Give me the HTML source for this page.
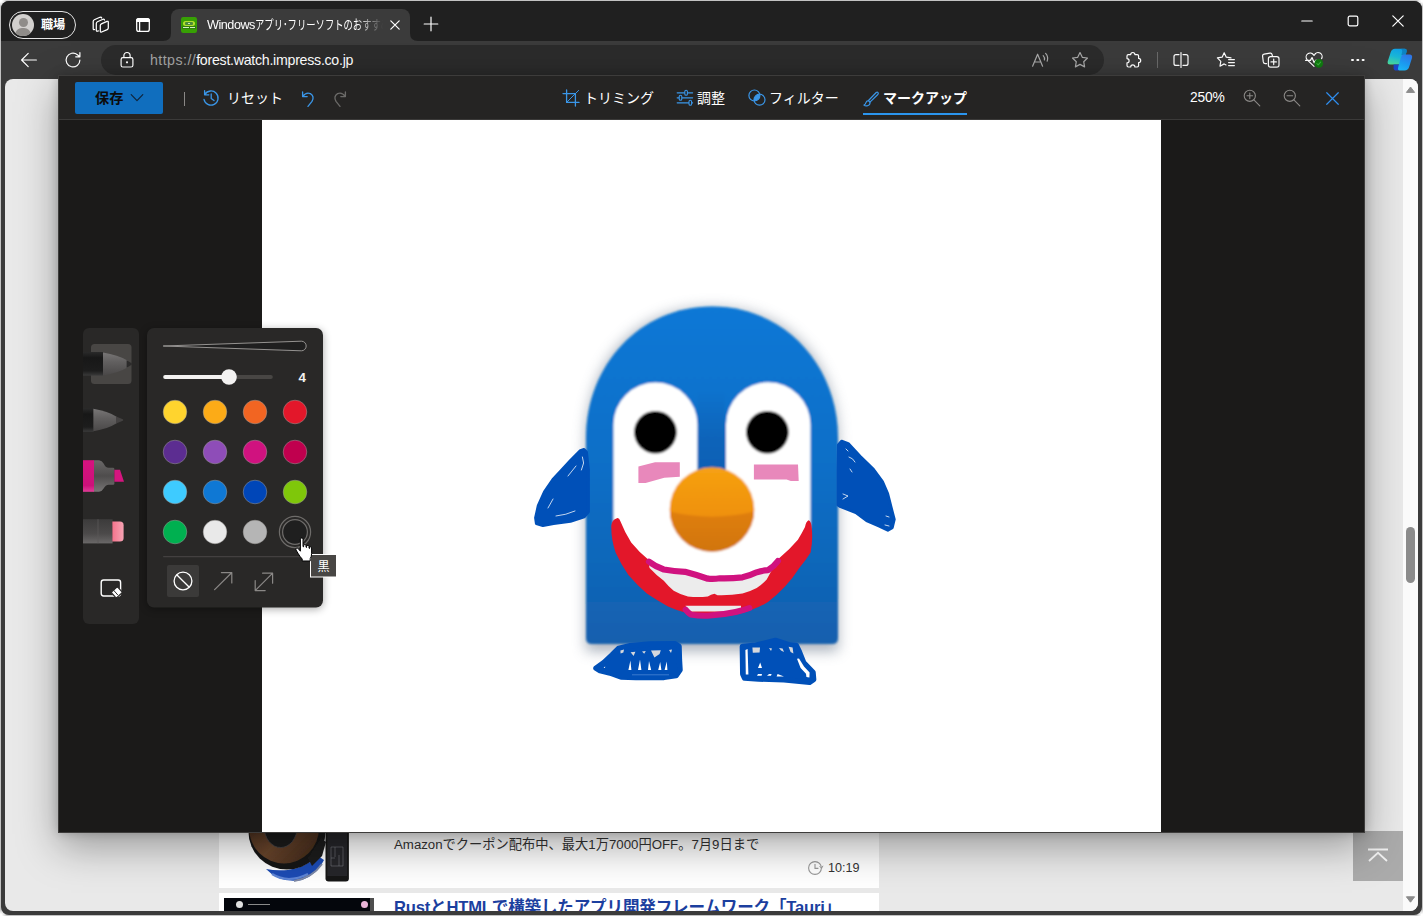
<!DOCTYPE html>
<html lang="ja">
<head>
<meta charset="utf-8">
<title>Windowsアプリ・フリーソフトのおすすめ</title>
<style>
*{box-sizing:border-box;margin:0;padding:0}
html,body{width:1423px;height:916px;overflow:hidden;background:#c2c2c2}
body{background:radial-gradient(circle at 0 0,#fff 0,#fff 2px,rgba(255,255,255,0) 7px),radial-gradient(circle at 100% 0,#fff 0,#fff 2px,rgba(255,255,255,0) 7px),radial-gradient(circle at 0 100%,#fff 0,#fff 2px,rgba(255,255,255,0) 7px),radial-gradient(circle at 100% 100%,#fff 0,#fff 2px,rgba(255,255,255,0) 7px),#c2c2c2}
body{font-family:"Liberation Sans","Noto Sans CJK JP",sans-serif;position:relative;color:#fff}
.abs{position:absolute}
#win{position:absolute;left:0;top:0;width:1423px;height:916px;background:#3b3b3b;clip-path:inset(1px 1px 1px 1px round 8px)}
#tabstrip{position:absolute;left:0;top:0;width:1423px;height:41px;background:#202020}
#toolbar{position:absolute;left:0;top:41px;width:1423px;height:38px;background:#3b3b3b}
#page{position:absolute;left:5px;top:79px;width:1413px;height:832px;background:#e9e9e9;border-radius:8px;overflow:hidden}
#ov{position:absolute;left:58px;top:75px;width:1307px;height:758px;background:#1b1a19;box-shadow:0 14px 38px rgba(0,0,0,.34),0 0 10px rgba(0,0,0,.2);border:1px solid #3d3c3b}
#ovbar{position:absolute;left:0;top:0;width:1305px;height:44px;background:#252423;border-bottom:1px solid #3b3a39}
#canvas{position:absolute;left:203px;top:44px;width:899px;height:712px;background:#fff}
.ot{position:absolute;top:11px;font-size:14px;line-height:22px;white-space:nowrap;color:#fff}
.bl{fill:none;stroke:#3a96e8;stroke-width:1.3;stroke-linecap:round;stroke-linejoin:round}
svg{position:absolute;overflow:visible}
.ic{fill:none;stroke:#fff;stroke-width:1.2;stroke-linecap:round;stroke-linejoin:round}
</style>
</head>
<body>
<div id="win">
<div id="tabstrip">
<div class="abs" style="left:9px;top:11px;width:66.5px;height:28px;border:1.3px solid #e6e6e6;border-radius:14px"></div>
<div class="abs" style="left:12px;top:14px;width:22px;height:22px;border-radius:11px;background:#d2d0ce;overflow:hidden">
<div class="abs" style="left:6.5px;top:3.5px;width:9px;height:9px;border-radius:5px;background:#8f8c89"></div>
<div class="abs" style="left:3px;top:13.5px;width:16px;height:14px;border-radius:8px;background:#8f8c89"></div>
</div>
<div class="abs" style="left:41px;top:16px;font-size:12.2px;line-height:18px;font-weight:700;color:#fff;letter-spacing:-0.3px">職場</div>
<svg style="left:0;top:0" width="160" height="41" viewBox="0 0 160 41"><g class="ic" style="stroke-width:1.25">
<path d="M100.3 25.6 Q100.3 24.4 101.4 23.9 L107 21.4 Q108.3 20.9 108.3 22.2 V28 Q108.3 29.1 107.2 29.6 L101.6 32 Q100.3 32.5 100.3 31.2Z"/>
<path d="M98.4 30.9 L97.4 31.2 Q96.3 31.5 96.3 30.3 V23.4 Q96.3 22.2 97.4 21.7 L103 19.3 Q104.3 18.9 104.5 20"/>
<path d="M94.6 29.5 L94.2 29.6 Q93.2 29.9 93.2 28.7 V21.3 Q93.2 20.2 94.3 19.7 L99.9 17.3 Q101.4 16.9 101.7 18"/>
</g></svg>
<svg style="left:0;top:0" width="160" height="41" viewBox="0 0 160 41"><rect x="136.7" y="18.6" width="12.6" height="12.8" rx="2.2" class="ic" style="stroke-width:1.3"/><path d="M136.7 21.4 H149.3 V20.8 Q149.3 18.6 147.1 18.6 H138.9 Q136.7 18.6 136.7 20.8Z" fill="#fff" stroke="#fff" stroke-width="1.3"/><path d="M139.6 22 V31.4" class="ic" style="stroke-width:1.3"/></svg>
<div class="abs" style="left:171px;top:9px;width:239px;height:32px;background:#3b3b3b;border-radius:8px 8px 0 0"></div>
<svg style="left:163px;top:33px" width="8" height="8" viewBox="0 0 8 8"><path d="M8 0 V8 H0 Q8 8 8 0Z" fill="#3b3b3b"/></svg>
<svg style="left:410px;top:33px" width="8" height="8" viewBox="0 0 8 8"><path d="M0 0 V8 H8 Q0 8 0 0Z" fill="#3b3b3b"/></svg>
<div class="abs" style="left:181px;top:17px;width:16px;height:16px;border-radius:2.2px;background:#37a004;overflow:hidden">
<div class="abs" style="left:2.2px;top:4px;width:11.6px;height:5px;border-radius:2.5px;background:#b2de2c"></div>
<div class="abs" style="left:4.4px;top:5.2px;width:7.2px;height:2.4px;border-radius:1px;background:#4d8a3a"></div>
<div class="abs" style="left:6.6px;top:5.8px;width:2.8px;height:1.2px;background:#cfe8c0"></div>
<div class="abs" style="left:1px;top:9.4px;width:14px;height:2.6px;background:#2f7d0a"></div>
<div class="abs" style="left:1.6px;top:10.2px;width:6.4px;height:1px;background:#d4efc4"></div>
<div class="abs" style="left:9px;top:10.2px;width:5.4px;height:1px;background:#d4efc4"></div>
</div>
<div class="abs" id="tabtitle" style="left:207px;top:16px;width:176px;height:20px;overflow:hidden;white-space:nowrap;font-size:12.6px;line-height:19px;color:#fff;letter-spacing:-0.45px;-webkit-mask-image:linear-gradient(90deg,#000 0,#000 150px,transparent 176px);mask-image:linear-gradient(90deg,#000 0,#000 150px,transparent 176px)">Windows<span style="display:inline-block;transform:scaleX(.74);transform-origin:0 50%;letter-spacing:0">アプリ･フリーソフトのおすすめ情報 - 窓の杜</span></div>
<svg style="left:389px;top:19px" width="12" height="12" viewBox="0 0 12 12"><path d="M1.8 1.8 L10.2 10.2 M10.2 1.8 L1.8 10.2" class="ic" stroke-width="1.1"/></svg>
<svg style="left:423px;top:16px" width="16" height="16" viewBox="0 0 16 16"><path d="M8 1.2 V14.8 M1.2 8 H14.8" class="ic" stroke-width="1.2"/></svg>
<svg style="left:1301px;top:15px" width="12" height="12" viewBox="0 0 12 12"><path d="M0.8 6 H11.2" class="ic" stroke-width="1.1"/></svg>
<svg style="left:1347px;top:15px" width="12" height="12" viewBox="0 0 12 12"><rect x="1.2" y="1.2" width="9.6" height="9.6" rx="1.6" class="ic" stroke-width="1.1"/></svg>
<svg style="left:1392px;top:15px" width="12" height="12" viewBox="0 0 12 12"><path d="M0.8 0.8 L11.2 11.2 M11.2 0.8 L0.8 11.2" class="ic" stroke-width="1.1"/></svg>
</div>
<div id="toolbar">
<svg style="left:20px;top:9.5px" width="18" height="18" viewBox="0 0 18 18"><path d="M16.4 9 H1.8 M8.2 2.4 L1.6 9 L8.2 15.6" class="ic" stroke-width="1.25"/></svg>
<svg style="left:64px;top:10px" width="18" height="18" viewBox="0 0 18 18"><path d="M15.9 9 A6.9 6.9 0 1 1 13.4 3.7 L15.6 5.6 M15.9 1.6 V5.8 H11.7" class="ic" stroke-width="1.25"/></svg>
<div class="abs" style="left:101px;top:4px;width:1003px;height:30px;border-radius:15px;background:#2b2b2b"></div>
<svg style="left:118px;top:10px" width="18" height="18" viewBox="0 0 18 18"><rect x="3.1" y="6.6" width="11.8" height="9.4" rx="1.8" class="ic" stroke-width="1.25"/><path d="M5.9 6.4 V4.6 A3.1 3.1 0 0 1 12.1 4.6 V6.4" class="ic" stroke-width="1.25"/><circle cx="9" cy="11.3" r="1.1" fill="#fff"/></svg>
<div class="abs" id="url" style="left:150px;top:9px;font-size:14.2px;line-height:20px;white-space:nowrap;color:#fff;letter-spacing:-0.1px"><span style="color:#a3a3a3;letter-spacing:0.45px">https://</span><span style="letter-spacing:-0.27px">forest.watch.impress.co.jp</span></div>
<svg style="left:1031px;top:10px" width="20" height="18" viewBox="0 0 20 18"><g class="ic" style="stroke:#a8a8a8;stroke-width:1.2"><path d="M1.6 15.2 L6.6 3.2 L11.6 15.2 M3.4 11 H9.8"/><path d="M12.2 4.6 Q14 6.4 13.4 9"/><path d="M14.6 2.4 Q17.6 5.6 16.2 10.2"/></g></svg>
<svg style="left:1071px;top:10px" width="18" height="18" viewBox="0 0 18 18"><path d="M9 1.6 L11.3 6.3 L16.5 7 L12.7 10.7 L13.6 15.9 L9 13.4 L4.4 15.9 L5.3 10.7 L1.5 7 L6.7 6.3Z" class="ic" style="stroke:#a8a8a8;stroke-width:1.2"/></svg>
<svg style="left:1124px;top:10px" width="18" height="18" viewBox="0 0 18 18"><path d="M6.7 3.6 A2.1 2.1 0 0 1 10.9 3.6 H13.2 Q14.6 3.6 14.6 5 V7.4 A2.1 2.1 0 0 1 14.6 11.6 V14.6 Q14.6 16 13.2 16 H10.9 A2.1 2.1 0 0 0 6.7 16 H4.4 Q3 16 3 14.6 V11.8 A2.1 2.1 0 0 0 3 7.6 V5 Q3 3.6 4.4 3.6Z" class="ic" stroke-width="1.25"/></svg>
<div class="abs" style="left:1157px;top:11px;width:1px;height:16px;background:#6a6a6a"></div>
<svg style="left:1172px;top:10px" width="18" height="18" viewBox="0 0 18 18"><path d="M7 3.6 H4 Q2 3.6 2 5.6 V12.4 Q2 14.4 4 14.4 H7 M11 3.6 H14 Q16 3.6 16 5.6 V12.4 Q16 14.4 14 14.4 H11 M9 1.6 V16.4" class="ic" stroke-width="1.25"/></svg>
<svg style="left:1216px;top:10px" width="20" height="18" viewBox="0 0 20 18"><path d="M8.2 1.8 L10.3 6.2 L15 6.9 M8.2 1.8 L6.1 6.2 L1.4 6.9 L4.8 10.3 L4 15.2 L8.2 12.9 L10 13.9 M12.6 8.6 H18.4 M12.6 11.6 H18.4 M12.6 14.6 H18.4" class="ic" stroke-width="1.25"/></svg>
<svg style="left:1261px;top:10px" width="20" height="18" viewBox="0 0 20 18"><path d="M5.6 12.6 H4.4 Q2.6 12.6 2.3 10.9 L1.6 5.2 Q1.4 3.5 3.1 3.2 L9 2.2 Q10.7 1.9 11.1 3.6 L11.4 5" class="ic" stroke-width="1.25"/><rect x="7.4" y="5.6" width="10.6" height="10.6" rx="2.2" class="ic" stroke-width="1.25"/><path d="M12.7 8.2 V13.6 M10 10.9 H15.4" class="ic" stroke-width="1.25"/></svg>
<svg style="left:1304px;top:10px" width="22" height="20" viewBox="0 0 22 20"><path d="M10 15.4 L3 8.6 A4 4 0 0 1 9.4 3.6 L10 4.4 L10.6 3.6 A4 4 0 0 1 17.6 7.6" class="ic" stroke-width="1.25"/><path d="M1.6 9.4 H6.4 L8 6.6 L10.2 11.8 L11.6 9.4 H13" class="ic" stroke-width="1.2"/><circle cx="14.8" cy="12.4" r="4.3" fill="#107c10"/><path d="M12.9 12.5 L14.2 13.9 L16.6 11.2" class="ic" style="stroke:#3fae3f;stroke-width:1.1"/></svg>
<div class="abs" style="left:1351.4px;top:17.6px;width:2.8px;height:2.8px;border-radius:1px;background:#fff;box-shadow:5.3px 0 0 #fff,10.6px 0 0 #fff"></div>
<svg style="left:1387px;top:7px" width="26" height="24" viewBox="0 0 26 24">
<defs><linearGradient id="cp1" x1="0.6" y1="0" x2="0.3" y2="1"><stop offset="0" stop-color="#0f9fe6"/><stop offset="0.5" stop-color="#19b6d6"/><stop offset="1" stop-color="#48d69a"/></linearGradient>
<linearGradient id="cp2" x1="0.7" y1="0" x2="0.3" y2="1"><stop offset="0" stop-color="#2f74e6"/><stop offset="0.6" stop-color="#1a9cf0"/><stop offset="1" stop-color="#1bb4f4"/></linearGradient></defs>
<path d="M13.6 0.8 H17.6 Q20.6 1 19.4 4.6 L16 14 Q15 16.6 12.4 16.6 H3 Q0 16.4 0.8 13.2 L3.6 4.4 Q4.8 0.8 8 0.8Z" fill="url(#cp1)"/>
<path d="M13.6 0.8 H17.6 Q20.6 1 19.4 4.6 L18.4 7.2 L14.4 7 L15.2 3.6 Q15.6 1.2 13.6 0.8Z" fill="#0b78b8" opacity=".75"/>
<path d="M6.6 16.6 H12.6 L11.6 20.4 Q11.2 22 12.6 22.6 H9.6 Q6.2 22.4 6.6 19.4Z" fill="#1b45c8"/>
<path d="M16.8 6.6 H22.6 Q25.8 6.8 25 10 L22.2 18.8 Q21 22.6 17.6 22.6 H12.4 Q10.4 22.4 11 20 L13.8 9.6 Q14.6 6.6 16.8 6.6Z" fill="url(#cp2)"/>
</svg>
</div>
<div id="page">
<!-- coordinates inside #page: subtract (5,79) -->
<div class="abs" style="left:214px;top:0;width:660px;height:809px;background:#fff"></div>
<div class="abs" style="left:214px;top:814px;width:660px;height:30px;background:#fff"></div>
<svg id="thumb1" style="left:-5px;top:-79px" width="1423" height="916" viewBox="0 0 1423 916">
<defs><filter id="tb" x="-10%" y="-10%" width="120%" height="120%"><feGaussianBlur stdDeviation="0.6"/></filter>
<linearGradient id="brn" x1="0" y1="0" x2="1" y2="1"><stop offset="0" stop-color="#3c2618"/><stop offset="0.55" stop-color="#6b462d"/><stop offset="1" stop-color="#3a2416"/></linearGradient></defs>
<g filter="url(#tb)">
<path d="M266 869 Q280 884 302 880 Q318 874 324 860 L318 856 Q304 868 288 870 Q276 871 266 869Z" fill="#1f4cb4"/>
<path d="M272 874 Q288 884 308 874" fill="none" stroke="#5f86d6" stroke-width="2.2"/>
<path d="M294 881 Q312 878 322 864" fill="none" stroke="#7f8aa6" stroke-width="2"/>
<ellipse cx="287" cy="832" rx="38.5" ry="37.5" fill="#171717"/>
<ellipse cx="284" cy="828" rx="35" ry="35.5" fill="url(#brn)"/>
<ellipse cx="280.7" cy="827" rx="16.5" ry="20.5" fill="#1b1b1c" stroke="#46464a" stroke-width="0.8"/>
<path d="M308 858 L321 838 L326 842 L322 856 L312 866Z" fill="#1c1c1c"/>
<rect x="325.5" y="820" width="23.4" height="61.4" rx="3" fill="#151517"/>
<rect x="327.3" y="826" width="19.8" height="50" fill="#25262a"/>
<path d="M331 847 H343 V866 H331Z M335 847 V857 M339 855 V866 M331 858 H335" fill="none" stroke="#77797d" stroke-width="0.6"/>
</g>
</svg>
<div class="abs" style="left:389px;top:756px;font-size:13.25px;line-height:20px;color:#333;white-space:nowrap" id="art1">Amazonでクーポン配布中、最大1万7000円OFF。7月9日まで</div>
<svg style="left:802px;top:781px" width="16" height="16" viewBox="0 0 16 16"><circle cx="8" cy="8" r="6.4" fill="none" stroke="#999" stroke-width="1.1"/><path d="M8 4 V8.4 H11.4" fill="none" stroke="#999" stroke-width="1.1"/><path d="M12.6 6.2 L14.6 8.2 L16 5.8" fill="none" stroke="#999" stroke-width="1"/></svg>
<div class="abs" style="left:823px;top:780px;font-size:12.6px;line-height:18px;color:#333" id="time1">10:19</div>
<div class="abs" style="left:219px;top:819px;width:146px;height:20px;background:#04060c"></div>
<div class="abs" style="left:230.5px;top:821.5px;width:7.6px;height:7.6px;border-radius:4px;background:#e0e0e0"></div>
<div class="abs" style="left:243px;top:824.8px;width:22px;height:1.6px;background:#8a8a8a"></div>
<div class="abs" style="left:355.5px;top:821.8px;width:7.4px;height:7.4px;border-radius:4px;background:#eab4d8"></div>
<div class="abs" style="left:365px;top:819px;width:4px;height:20px;background:#4e4e4e"></div>
<div class="abs" style="left:389px;top:811.6px;font-size:16.6px;line-height:34px;font-weight:700;color:#1c3f9f;white-space:nowrap;letter-spacing:-0.2px" id="art2">RustとHTMLで構築したアプリ開発フレームワーク「Tauri」</div>
<!-- back to top -->
<div class="abs" style="left:1348px;top:752px;width:50px;height:50px;background:rgba(150,150,150,.75)"></div>
<svg style="left:1348px;top:752px" width="50" height="50" viewBox="0 0 50 50"><path d="M15 18.5 H35 M16 30 L25 21.8 L34 30" fill="none" stroke="#f2f2f2" stroke-width="1.8"/></svg>
</div>
<div id="ov">
<div id="ovbar">
<div class="abs" style="left:16px;top:6px;width:88px;height:32px;background:#106ebe;border-radius:2px"></div>
<div class="ot" style="left:36px;font-weight:700;color:#0c0c0c;font-size:14.2px">保存</div>
<svg style="left:71px;top:17px" width="14" height="10" viewBox="0 0 14 10"><path d="M1.2 1.6 L7 7.6 L12.8 1.6" fill="none" stroke="#10243a" stroke-width="1.2" stroke-linecap="round" stroke-linejoin="round"/></svg>
<div class="abs" style="left:125px;top:16px;width:1.4px;height:14px;background:#8a8886"></div>
<svg style="left:143px;top:13px" width="18" height="18" viewBox="0 0 18 18"><path d="M2.9 5.4 A7.1 7.1 0 1 1 2 10.4 M2.6 1.6 V5.8 H6.8" class="bl"/><path d="M9.2 5 V9.4 L12 11.6" class="bl"/></svg>
<div class="ot" style="left:168px">リセット</div>
<svg style="left:242px;top:14px" width="14" height="18" viewBox="0 0 14 18"><path d="M1.6 2 V6.6 H6.2 M1.8 6.4 Q5 1.8 9.4 3.6 Q13.8 6.2 11 11.4 L7 16.4" class="bl"/></svg>
<svg style="left:274px;top:14px" width="14" height="18" viewBox="0 0 14 18"><path d="M12.4 2 V6.6 H7.8 M12.2 6.4 Q9 1.8 4.6 3.6 Q0.2 6.2 3 11.4 L7 16.4" class="bl" style="stroke:#6b6a68"/></svg>
<svg style="left:503px;top:13px" width="18" height="18" viewBox="0 0 18 18"><path d="M4.6 1 V13.4 H17 M1 4.6 H13.4 V17" class="bl"/><path d="M16.6 1.4 L5 13" class="bl" style="stroke-width:1"/></svg>
<div class="ot" style="left:525px">トリミング</div>
<svg style="left:617px;top:13px" width="18" height="18" viewBox="0 0 18 18"><path d="M1.2 3.8 H16.6 M1.2 8.8 H16.6 M1.2 13.8 H16.6" class="bl" style="stroke-width:1.2"/><rect x="8.8" y="1.3" width="2.6" height="5" rx="1.3" fill="#252423" class="bl" style="fill:#252423;stroke-width:1.1"/><rect x="3.2" y="6.3" width="2.6" height="5" rx="1.3" class="bl" style="fill:#252423;stroke-width:1.1"/><rect x="13" y="11.3" width="2.6" height="5" rx="1.3" class="bl" style="fill:#252423;stroke-width:1.1"/></svg>
<div class="ot" style="left:638px">調整</div>
<svg style="left:688px;top:12px" width="20" height="20" viewBox="0 0 20 20"><circle cx="7.4" cy="7.5" r="5.5" class="bl" style="stroke-width:1.2"/><circle cx="12.5" cy="11.7" r="5.5" class="bl" style="stroke-width:1.2"/><path d="M12.747 6.205 A5.5 5.5 0 0 1 7.153 12.995 A5.5 5.5 0 0 1 12.747 6.205Z" fill="#3a96e8"/></svg>
<div class="ot" style="left:710px">フィルター</div>
<svg style="left:803.5px;top:14.5px" width="16.5" height="16.5" viewBox="0 0 18 18"><path d="M6 10.4 L14.4 1.6 Q15.6 0.8 16.4 1.8 Q17.2 2.8 16.2 3.8 L7.6 12.2" class="bl"/><path d="M6 10.4 L7.6 12.2 Q8 15.6 4.4 16.2 Q2.4 16.6 1 15.4 Q3 14.6 3.2 12.6 Q3.6 10.4 6 10.4Z" class="bl"/></svg>
<div class="ot" style="left:824px;font-weight:700">マークアップ</div>
<div class="abs" style="left:804px;top:36.6px;width:104px;height:2.4px;background:#2b95ee"></div>
<div class="ot" style="left:1131px;font-size:13.8px;letter-spacing:-0.2px" id="zm">250%</div>
<svg style="left:1184px;top:13px" width="18" height="18" viewBox="0 0 18 18"><g fill="none" stroke="#8a8886" stroke-width="1.1" stroke-linecap="round"><circle cx="6.8" cy="6.8" r="5.6"/><path d="M10.9 10.9 L16.8 16.8 M4 6.8 H9.6 M6.8 4 V9.6"/></g></svg>
<svg style="left:1224px;top:13px" width="18" height="18" viewBox="0 0 18 18"><g fill="none" stroke="#8a8886" stroke-width="1.1" stroke-linecap="round"><circle cx="6.8" cy="6.8" r="5.6"/><path d="M10.9 10.9 L16.8 16.8 M4 6.8 H9.6"/></g></svg>
<svg style="left:1266.5px;top:15.5px" width="13" height="13" viewBox="0 0 14 14"><path d="M0.8 0.8 L13.2 13.2 M13.2 0.8 L0.8 13.2" fill="none" stroke="#2f8ff0" stroke-width="1.3" stroke-linecap="round"/></svg>
</div>
<div id="canvas"></div>
</div>
<div class="abs" style="left:1403px;top:79px;width:15px;height:832px;background:#fafafa;border-radius:0 8px 8px 0"></div>
<svg style="left:1403px;top:79px" width="15" height="832" viewBox="0 0 15 832"><path d="M3.4 13.4 L7.5 8 L11.6 13.4Z" fill="#8b8b8b" stroke="#8b8b8b" stroke-width="1" stroke-linejoin="round"/><path d="M3.4 817.8 L7.5 823.2 L11.6 817.8Z" fill="#8b8b8b" stroke="#8b8b8b" stroke-width="1" stroke-linejoin="round"/><rect x="3" y="448" width="9" height="56" rx="4.5" fill="#8b8b8b"/></svg>
<svg id="peng" style="left:0;top:0" width="1423" height="916" viewBox="0 0 1423 916">
<defs>
<filter id="b1" x="-10%" y="-10%" width="120%" height="120%"><feGaussianBlur stdDeviation="0.9"/></filter>
<filter id="b8" x="-20%" y="-20%" width="140%" height="140%"><feGaussianBlur stdDeviation="7"/></filter>
<linearGradient id="bd" x1="0" y1="0" x2="0" y2="1"><stop offset="0" stop-color="#0878d6"/><stop offset="0.5" stop-color="#0b6ec6"/><stop offset="1" stop-color="#1460ae"/></linearGradient>
<linearGradient id="ns" x1="0" y1="0" x2="0" y2="1"><stop offset="0" stop-color="#f6a112"/><stop offset="0.6" stop-color="#ef900f"/><stop offset="1" stop-color="#e8870f"/></linearGradient><linearGradient id="gapg" x1="0" y1="0" x2="0" y2="1"><stop offset="0" stop-color="#0a55a6" stop-opacity="0"/><stop offset="0.6" stop-color="#0a55a6" stop-opacity=".45"/><stop offset="1" stop-color="#0a55a6" stop-opacity=".55"/></linearGradient><linearGradient id="ns2" x1="0" y1="0" x2="0" y2="1"><stop offset="0" stop-color="#e07f10"/><stop offset="1" stop-color="#cf740f"/></linearGradient>
</defs>
<path d="M586 646 V440 C586 360 632 303 712 303 C792 303 838 360 838 440 V646Z" fill="#55657a" opacity=".5" filter="url(#b8)" transform="translate(0,5)"/>
<g filter="url(#b1)">
<path d="M586 638 V438 C586 365 640 306.5 712 306.5 C784 306.5 838 365 838 438 V638 Q838 644 832 644 H592 Q586 644 586 638Z" fill="url(#bd)"/>
<path d="M613.5 424.6 A42 42 0 0 1 697.5 424.6 V470 H726 V424.6 A42 42 0 0 1 810.5 424.6 V520 C810.5 570 770 607 712 607 C654 607 613.5 570 613.5 520Z" fill="#fff"/>
<rect x="697.5" y="390" width="27.5" height="82" fill="url(#gapg)"/><circle cx="655.4" cy="432.2" r="21.3" fill="#000"/>
<circle cx="767.4" cy="432.2" r="21.3" fill="#000"/>
<clipPath id="nc"><circle cx="712" cy="509.5" r="42.3"/></clipPath>
<circle cx="712" cy="509.5" r="42.3" fill="url(#ns)"/>
<path d="M666 510.5 Q712 523 758 510.5 V556 H666Z" fill="url(#ns2)" clip-path="url(#nc)"/>
</g>
<path d="M638.4 466.4 L655 462.3 H679.8 V476.8 L664.3 477.8 L645.6 483 H638.4Z" fill="#e888bb"/>
<path d="M753.9 464.4 H798 L798.7 481 H790.8 L786.6 479.5 H753.9Z" fill="#e888bb"/>
<path d="M649 562 L664 570 L685 572 L708 579 L742 577.5 L768 570 L778 561 L770 582 L745 596 L700 599 L670 592 L650 572Z" fill="#ececec"/>
<path d="M616.3 518.4 Q619 517 620.4 521.3 Q625 533 631.2 542.5 Q639 552 648.2 559.6 Q648.6 564 649.6 568 Q656 575 663.8 580.8 Q668 586 673.7 590.8 Q680 594.5 688 596.5 Q698 597.5 707.8 596.5 Q711 594.6 714.5 593.8 Q716 594.6 717.5 595.2 Q730 595.6 742.5 593.6 Q750 591.5 756.7 588 Q762 584.5 766.7 579.4 Q772 569 779.4 558 Q790 549 797.9 539.7 Q802 533 805 527 Q806 521.5 808.5 520.2 Q811.4 521 811.8 528.4 Q813 540 810.6 552.5 Q806 560 799.3 568 Q793 578 785 586.5 Q777 595 768 602 Q760 607 751 610 Q740 615 720 617 Q700 617.5 685 612.5 Q676 610 668 606.4 Q657 600.5 646.8 593.6 Q637 585 628.4 575 Q621 564.5 615.6 552.5 Q611 539 611.3 525.5 Q612 520 616.3 518.4Z" fill="#e3172a"/>
<path d="M685.5 605.8 H741 V611.4 H688Z" fill="#ececec"/>
<path d="M649 561.7 Q655 566.5 663.8 569.5 Q674 571.4 685 571.8 Q697 575 707.8 578.7 Q714 579.2 720 578.3 Q731 578.6 742.5 577.3 Q750 575.6 756.7 572.3 Q762 570.4 768 570.2 Q774 566.5 778 561" fill="none" stroke="#d0127f" stroke-width="6.2" stroke-linecap="round" stroke-linejoin="round"/>
<path d="M685.6 609.6 Q688 612.6 690.8 614.6 Q699 616 707.8 615.7 Q722 615 735.5 612 Q743 610.4 749.4 608" fill="none" stroke="#d0127f" stroke-width="6" stroke-linecap="round" stroke-linejoin="round"/>
<g fill="#0050b8" stroke="#0050b8" stroke-width="3" stroke-linejoin="round" stroke-linecap="round">
<path d="M584 449.4 L580.4 450.6 L570.5 460.5 L561.3 470.5 L552.9 479.6 L544.5 491.9 L538.3 505.6 L535.6 517.9 L536.4 523.6 L542.9 525.6 L553.6 523.6 L570.5 521.2 L584.2 516.9 L588.4 511.7 L588.4 470 L586.4 452Z"/>
<path d="M841.6 441.2 L848.2 443.6 L860 456.2 L873.4 469.4 L882.4 481.6 L887.6 493.6 L891.4 508.7 L894.2 519.4 L892.2 527.6 L887.8 530.2 L878.8 526 L866.6 520.6 L855.9 512.6 L840.6 506.6 L838 505 L838 470 L838.4 445Z"/>
<path d="M596 668.2 L604 662.4 L612 655 L618.6 648.4 L630 645.8 L650 644 L675 643.8 L679 646.4 L679.4 660 L680 670 L676 675.6 L664 677.4 L636 677.6 L621 677 L610 673 L600 670.6Z" style="stroke-width:5.5"/>
<path d="M742.4 646.6 L756 645.2 L775.4 640.4 L790 645 L796.4 645.6 L799.4 652 L803.6 662.6 L813 672.4 L813.6 679.4 L809.6 682.2 L784 679.8 L758.6 679 L744.6 678 L742.8 674Z" style="stroke-width:5.5"/>
</g>
<g fill="#d6d8dc">
<path d="M620.4 650.4 L624 649.6 L623.4 652.4 L620.6 653.4Z M630.6 652.2 L635.4 651.8 L633.6 656 Z M642 651.4 L645.8 651 L644.2 653.8Z M651 650.6 L660.8 650.2 L659.6 654 L654.4 657.6Z M669 650 L672 649.4 L671 653Z"/>
<path d="M752.4 647.6 L760 647.4 L759.6 652.6 L752.8 652.8Z M769 648 L772 648.6 L771 651Z M779 648 L782.6 648.4 L784 652 L781 650.6Z M788.6 646.8 L792.6 647.4 L793.4 653.6 L790.6 652Z"/>
</g>
<g fill="#fff">
<path d="M628.4 670 L630.4 660.6 L631.4 670Z M638 670 L640 659.4 L641.4 670Z M648 670 L649 661 L651.2 670Z M658.2 670 L660.2 662 L661.4 670Z M664.6 670 L666.8 661.6 L667.4 670Z M603.6 667.6 L605.2 666.4 L605 668Z"/>
<path d="M745.4 650 L747.6 649 L748.4 674.6 L745.8 674.6Z M758 668 L760.2 662.4 L762 668Z M757 675.8 L758 674 H762 L761.6 675.8Z M767 675.8 L769 674 H771.6 L771 675.8Z M776.6 676.4 L777.6 674 L784 676.6Z M797 658.8 L799 658.4 L804 666.4 L809.6 672.6 L809.4 677.4 L806.4 677 L806 673.8 L800.6 668Z"/>
</g>
<path d="M632 674.8 H669" fill="none" stroke="#3f7fd0" stroke-width="0.9"/>

<g fill="none" stroke="#fff" stroke-width="0.9" stroke-linecap="round" opacity=".85">
<path d="M582.4 457 L583.6 463 L581.4 470 M568 476 L576 466 M548 508 L553 499 M556 516 Q566 515 575 511"/>
<path d="M846 449 L848 451 M849 457 Q853 458 855 462 M850 469 L852 472 M843 494 L848 496 L843 499 M886 516 L889 517 M885 525 L889 526"/>
</g>
</svg>
<svg id="panels" style="left:0;top:0" width="1423" height="916" viewBox="0 0 1423 916">
<defs>
<filter id="psh" x="-20%" y="-20%" width="140%" height="140%"><feGaussianBlur stdDeviation="4"/></filter>
<linearGradient id="pen" x1="0" y1="0" x2="0" y2="1"><stop offset="0" stop-color="#2a2a2a"/><stop offset="0.25" stop-color="#171717"/><stop offset="0.8" stop-color="#1d1d1d"/><stop offset="1" stop-color="#3a3a3a"/></linearGradient>
<linearGradient id="cone" x1="0" y1="0" x2="0" y2="1"><stop offset="0" stop-color="#787676"/><stop offset="0.4" stop-color="#626060"/><stop offset="1" stop-color="#4a4848"/></linearGradient>
<linearGradient id="hl" x1="0" y1="0" x2="0" y2="1"><stop offset="0" stop-color="#6a6868"/><stop offset="0.5" stop-color="#4e4c4c"/><stop offset="1" stop-color="#777575"/></linearGradient>
<linearGradient id="mg" x1="0" y1="0" x2="0" y2="1"><stop offset="0" stop-color="#d6127f"/><stop offset="0.8" stop-color="#cc117a"/><stop offset="1" stop-color="#e23c98"/></linearGradient>
<linearGradient id="er" x1="0" y1="0" x2="0" y2="1"><stop offset="0" stop-color="#3c3b3b"/><stop offset="0.6" stop-color="#4c4a4a"/><stop offset="1" stop-color="#6a6868"/></linearGradient>
<linearGradient id="pk" x1="0" y1="0" x2="1" y2="0"><stop offset="0" stop-color="#f4738c"/><stop offset="1" stop-color="#f6a3b3"/></linearGradient>
<clipPath id="lpc"><rect x="83" y="328" width="56" height="296" rx="6"/></clipPath>
</defs>
<rect x="147" y="330" width="176" height="279" rx="7" fill="#000" opacity=".35" filter="url(#psh)"/>
<rect x="83" y="328" width="56" height="296" rx="6" fill="#292827"/>
<rect x="147" y="328" width="176" height="279.5" rx="7" fill="#292827"/>
<g clip-path="url(#lpc)">
<rect x="91" y="344" width="40.5" height="40" rx="3.5" fill="#484644"/>
<rect x="80" y="352" width="23.2" height="23.6" fill="url(#pen)"/>
<path d="M103 352.6 Q118 355 127.4 360.6 L127.4 367.4 Q118 373 103 375.4Z" fill="url(#cone)"/>
<path d="M126.6 360.2 L131.6 363.2 Q132.4 364 131.6 364.8 L126.6 367.8Z" fill="#2c2b2b"/>
<rect x="80" y="408.2" width="13.6" height="23.6" fill="url(#pen)"/>
<path d="M93.4 408.8 Q108 411.2 116.6 416.8 L116.6 423.2 Q108 428.8 93.4 431.2Z" fill="url(#cone)"/>
<path d="M116.2 416.6 L122.8 419.2 Q123.8 420 122.8 420.8 L116.2 423.4Z" fill="#444242"/>
<path d="M93.6 460.2 H99 Q102 460.4 103.6 463.4 Q105.4 467.6 108.6 467.8 H113 Q114.4 467.8 114.4 469.2 V483.4 Q114.4 484.8 113 484.8 H108.6 Q105.6 485 103.6 488.6 Q102 491.6 99 491.8 H93.6Z" fill="url(#hl)"/>
<rect x="80" y="460.2" width="14" height="31.6" fill="url(#mg)"/>
<path d="M114.4 469.8 H120 L124 481.8 L114.4 481.8Z" fill="#d4157f"/>
<rect x="80" y="519.2" width="32.6" height="24.2" fill="url(#er)"/>
<path d="M98 519.2 V543.4" stroke="#5a5858" stroke-width="0.8"/>
<path d="M112.4 521.6 H120 Q123.6 521.6 123.6 525.2 V538 Q123.6 541.6 120 541.6 H112.4Z" fill="url(#pk)"/>
</g>
<rect x="101.2" y="580" width="19.4" height="16" rx="2.4" fill="none" stroke="#fff" stroke-width="1.4"/>
<path d="M112 591.6 L116.6 587.4 Q117.4 586.8 118.2 587.6 L121.8 591.6 Q122.4 592.4 121.6 593.2 L117 597.4 Q116.2 598 115.4 597.2 L111.8 593.2 Q111.2 592.4 112 591.6Z" fill="#fff" stroke="#292827" stroke-width="1.2"/>
<path d="M113.6 590.2 L117.8 595" stroke="#292827" stroke-width="1"/>
<path d="M163.2 346 L301.4 341.2 A4.8 4.8 0 0 1 301.4 350.8Z" fill="#1f1f1f" stroke="#a19f9d" stroke-width="0.9" stroke-linejoin="round"/>
<rect x="163.2" y="375" width="109.6" height="4" rx="2" fill="#484644"/>
<rect x="163.2" y="375" width="66" height="4" rx="2" fill="#f3f2f1"/>
<circle cx="229" cy="377" r="7.8" fill="#f3f2f1"/>
<text x="298.6" y="381.8" font-family="Liberation Sans, sans-serif" font-weight="700" font-size="13.4" fill="#f3f2f1">4</text>
<circle cx="175" cy="412" r="11.8" fill="#ffd42e" stroke="rgba(160,158,156,.55)" stroke-width="0.9"/><circle cx="215" cy="412" r="11.8" fill="#fcab17" stroke="rgba(160,158,156,.55)" stroke-width="0.9"/><circle cx="255" cy="412" r="11.8" fill="#f26522" stroke="rgba(160,158,156,.55)" stroke-width="0.9"/><circle cx="295" cy="412" r="11.8" fill="#e3172a" stroke="rgba(160,158,156,.55)" stroke-width="0.9"/><circle cx="175" cy="452" r="11.8" fill="#5c2d91" stroke="rgba(160,158,156,.55)" stroke-width="0.9"/><circle cx="215" cy="452" r="11.8" fill="#8e4db8" stroke="rgba(160,158,156,.55)" stroke-width="0.9"/><circle cx="255" cy="452" r="11.8" fill="#d0127f" stroke="rgba(160,158,156,.55)" stroke-width="0.9"/><circle cx="295" cy="452" r="11.8" fill="#c0004e" stroke="rgba(160,158,156,.55)" stroke-width="0.9"/><circle cx="175" cy="492" r="11.8" fill="#3ecbff" stroke="rgba(160,158,156,.55)" stroke-width="0.9"/><circle cx="215" cy="492" r="11.8" fill="#0f78d4" stroke="rgba(160,158,156,.55)" stroke-width="0.9"/><circle cx="255" cy="492" r="11.8" fill="#0046b8" stroke="rgba(160,158,156,.55)" stroke-width="0.9"/><circle cx="295" cy="492" r="11.8" fill="#7fc70a" stroke="rgba(160,158,156,.55)" stroke-width="0.9"/><circle cx="175" cy="532" r="11.8" fill="#00b050" stroke="rgba(160,158,156,.55)" stroke-width="0.9"/><circle cx="215" cy="532" r="11.8" fill="#e9e9e9" stroke="rgba(160,158,156,.55)" stroke-width="0.9"/><circle cx="255" cy="532" r="11.8" fill="#b5b5b5" stroke="rgba(160,158,156,.55)" stroke-width="0.9"/><circle cx="295" cy="532" r="15.6" fill="#292827" stroke="#6e6c6a" stroke-width="1.2"/><circle cx="295" cy="532" r="12.4" fill="#1f1f1f" stroke="#6e6c6a" stroke-width="1.2"/>
<rect x="163.2" y="556.2" width="144" height="1" fill="#4a4847"/>
<rect x="167" y="565" width="32" height="32" rx="2" fill="#3b3a39"/>
<circle cx="183" cy="581" r="8.9" fill="none" stroke="#fff" stroke-width="1.3"/><path d="M176.7 574.7 L189.3 587.3" stroke="#fff" stroke-width="1.3"/>
<path d="M214.6 589.6 L231.6 572.8 M221.4 572.6 H231.8 V583" fill="none" stroke="#8a8886" stroke-width="1.2" stroke-linecap="round" stroke-linejoin="round"/>
<path d="M255.4 590.4 L272.4 573.4 M262.6 573.2 H272.6 V583.2 M255.2 580.6 V590.6 H265.2" fill="none" stroke="#8a8886" stroke-width="1.2" stroke-linecap="round" stroke-linejoin="round"/>
<rect x="310.5" y="554.5" width="26" height="22.5" fill="#484644" stroke="#fff" stroke-width="1"/>
<text x="317.6" y="570.6" font-family="Liberation Sans, Noto Sans CJK JP, sans-serif" font-size="12.2" fill="#fff">黒</text>
<g transform="translate(295.2,537.6)"><path d="M5.2 1.6 Q5.2 0.4 6.5 0.4 Q7.8 0.4 7.8 1.6 V9 L8.4 9.2 V8 Q8.4 7 9.6 7 Q10.8 7 10.8 8 V9.6 L11.4 9.8 V8.8 Q11.4 7.8 12.6 7.8 Q13.8 7.8 13.8 8.8 V10.6 L14.4 10.8 V10 Q14.4 9.2 15.4 9.2 Q16.4 9.2 16.4 10.2 V16 Q16.4 19 15 21 V23.4 H7 V21.4 Q4.6 19 3 16 L0.8 12.4 Q0.2 11.2 1.2 10.6 Q2.2 10.2 3 11 L5.2 13.6Z" fill="#fff" stroke="#000" stroke-width="1" stroke-linejoin="round"/></g>
</svg>
</div>
</body>
</html>
